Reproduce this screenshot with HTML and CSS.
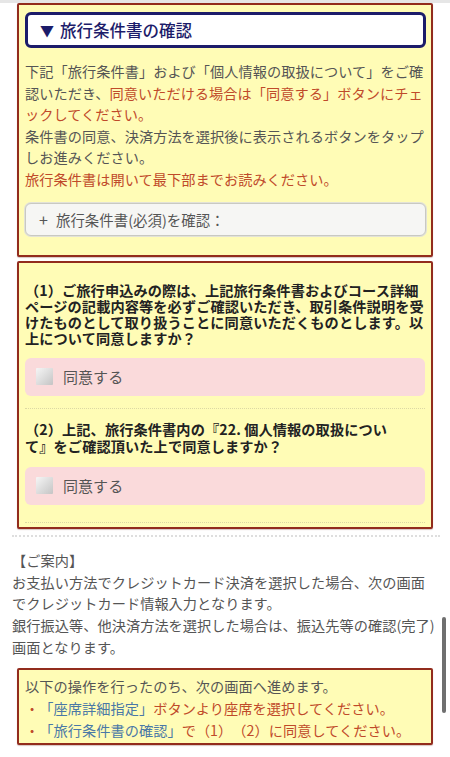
FILE: index.html
```html
<!DOCTYPE html>
<html lang="ja">
<head>
<meta charset="utf-8">
<title>旅行条件書の確認</title>
<link rel="stylesheet" href="styles.css">
</head>
<body>
<div class="topline"></div>

<section class="notice-box terms">
  <h2 class="terms-title"><span class="tri">▼</span>旅行条件書の確認</h2>
  <p class="terms-text">下記「旅行条件書」および「個人情報の取扱について」をご確認いただき、<span class="red">同意いただける場合は「同意する」ボタンにチェックしてください。</span><br>条件書の同意、決済方法を選択後に表示されるボタンをタップしお進みください。<br><span class="red">旅行条件書は開いて最下部までお読みください。</span></p>
  <div class="open-btn"><span class="plus">+</span>旅行条件書(必須)を確認：</div>
</section>

<section class="notice-box agree">
  <div class="agree-item">
    <p class="question">（1）ご旅行申込みの際は、上記旅行条件書およびコース詳細ページの記載内容等を必ずご確認いただき、取引条件説明を受けたものとして取り扱うことに同意いただくものとします。以上について同意しますか？</p>
    <label class="agree-btn"><span class="check"></span>同意する</label>
  </div>
  <div class="agree-item second">
    <p class="question">（2）上記、旅行条件書内の『22. 個人情報の取扱につい<br>て』をご確認頂いた上で同意しますか？</p>
    <label class="agree-btn"><span class="check"></span>同意する</label>
  </div>
</section>

<div class="divider"></div>

<p class="guide">【ご案内】<br>お支払い方法でクレジットカード決済を選択した場合、次の画面でクレジットカード情報入力となります。<br>銀行振込等、他決済方法を選択した場合は、振込先等の確認(完了)画面となります。</p>

<section class="notice-box steps">
  <p class="steps-text">以下の操作を行ったのち、次の画面へ進めます。<br><span class="red">・</span><span class="blue">「座席詳細指定」</span><span class="red">ボタンより座席を選択してください。</span><br><span class="red">・</span><span class="blue">「旅行条件書の確認」</span><span class="red">で（1）（2）に同意してください。</span></p>
</section>

<div class="scrollbar"></div>
</body>
</html>
```

FILE: styles.css
```css
* { box-sizing: border-box; }

html, body {
  margin: 0;
  padding: 0;
  background: #ffffff;
}

body {
  font-family: "Noto Sans CJK JP", "Noto Sans", sans-serif;
  font-size: 14.2px;
  color: #555555;
  letter-spacing: 0.05px;
  text-spacing-trim: space-all;
  overflow: hidden;
  height: 757px;
  position: relative;
}

p { margin: 0; }

.topline {
  height: 3px;
  background: #e6e6e6;
}

.notice-box {
  margin: 0 17px;
  border: 2px solid #922c1d;
  border-radius: 2px;
  background: #fffcb6;
  box-shadow: 0 1px 1px rgba(90, 20, 10, 0.25);
}

.terms {
  padding: 7px 5px 19px 6px;
}

.terms-title {
  margin: 0;
  height: 36px;
  display: flex;
  align-items: center;
  padding-left: 12px;
  background: #ffffff;
  border: 3px solid #1c1c6a;
  border-radius: 6px;
  color: #1c1c6a;
  font-size: 16.5px;
  font-weight: 500;
  letter-spacing: 0;
}

.tri {
  font-size: 14px;
  margin-right: 6px;
}

.terms-text {
  margin-top: 13px;
  line-height: 21.6px;
}

.red { color: #bf4a2a; }
.blue { color: #4a78a6; }

.open-btn {
  margin-top: 12px;
  height: 33px;
  display: flex;
  align-items: center;
  padding-left: 13px;
  background: #f6f6f4;
  border: 1px solid #c9c9c2;
  box-shadow: 0 0 0 1px #e2e2d8;
  border-radius: 6px;
  font-size: 14.4px;
  color: #555555;
}

.plus {
  font-size: 16px;
  margin-right: 8px;
}

.agree {
  margin-top: 4px;
  padding: 7px 6px 4px 6px;
}

.agree-item {
  padding: 12px 0 12px;
  border-bottom: 1px dotted #dcd8a4;
}

.agree-item.second {
  padding-bottom: 17px;
}

.question {
  font-weight: 700;
  color: #222222;
  font-size: 14.2px;
  line-height: 16.3px;
  letter-spacing: 0.1px;
}

.agree-item.second .question {
  line-height: 17.5px;
}

.agree-btn {
  margin-top: 11px;
  height: 38px;
  display: flex;
  align-items: center;
  padding-left: 11px;
  background: #fadadb;
  border-radius: 6px;
  font-size: 15px;
  color: #555555;
}

.check {
  width: 17px;
  height: 17px;
  margin-right: 10px;
  background: linear-gradient(135deg, #f6f6f6 0%, #d8d8d8 60%, #c4c4c4 100%);
  border-radius: 1px;
}

.divider {
  margin: 6px 10px 0 12px;
  border-top: 2px dotted #dedede;
}

.guide {
  margin: 13px 12px 0 12px;
  line-height: 21.8px;
}

.steps {
  margin-top: 9px;
  padding: 5px 6px 2px 6px;
}

.steps-text {
  line-height: 22px;
}

.scrollbar {
  position: absolute;
  right: 4px;
  top: 617px;
  width: 4px;
  height: 96px;
  background: #6f6f6f;
  border-radius: 2px;
}
```
